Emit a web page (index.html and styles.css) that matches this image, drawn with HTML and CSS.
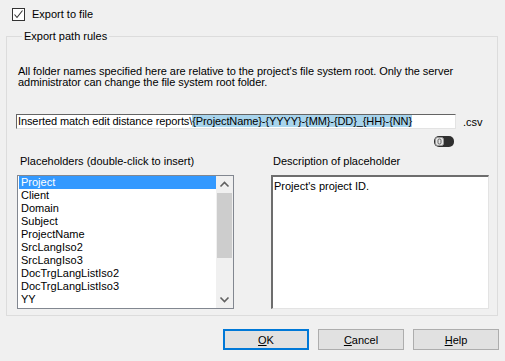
FILE: index.html
```html
<!DOCTYPE html>
<html>
<head>
  <title>Export path rules</title>
  <link rel="stylesheet" href="styles.css">
</head>
<body>
  <div class="dialog">
    <label class="check-row">
      <span class="checkbox">
        <svg width="11" height="11" viewBox="0 0 11 11"><polyline points="1.5,5.5 4,8.5 9.5,1.5" fill="none" stroke="#333" stroke-width="1.1"/></svg>
      </span>
      Export to file
    </label>

    <fieldset class="group">
      <legend>Export path rules</legend>
      <p class="info">All folder names specified here are relative to the project's file system root. Only the server administrator can change the file system root folder.</p>

      <div class="path-row">
        <div class="path-input">Inserted match edit distance reports\<span class="sel">{ProjectName}-{YYYY}-{MM}-{DD}_{HH}-{NN}</span></div>
        <span class="ext">.csv</span>
      </div>

      <div class="toggle-row">
        <svg width="20" height="11" viewBox="0 0 20 11">
          <rect x="0" y="0" width="20" height="11" rx="5" fill="#2f2f2f"/>
          <rect x="1.5" y="1.5" width="8" height="8" rx="2" fill="#e6e6e6" stroke="#9a9a9a"/>
          <rect x="4" y="3" width="3" height="5" rx="1.2" fill="none" stroke="#555" stroke-width="0.9"/>
        </svg>
      </div>

      <div class="columns">
        <div class="col">
          <div class="col-label">Placeholders (double-click to insert)</div>
          <div class="listbox">
            <ul class="items">
              <li class="active">Project</li>
              <li>Client</li>
              <li>Domain</li>
              <li>Subject</li>
              <li>ProjectName</li>
              <li>SrcLangIso2</li>
              <li>SrcLangIso3</li>
              <li>DocTrgLangListIso2</li>
              <li>DocTrgLangListIso3</li>
              <li>YY</li>
            </ul>
            <div class="scrollbar">
              <svg class="arrow" width="17" height="17" viewBox="0 0 17 17"><polyline points="4.5,10.5 8.5,6.5 12.5,10.5" fill="none" stroke="#606060" stroke-width="1.6"/></svg>
              <div class="track"><div class="thumb"></div></div>
              <svg class="arrow" width="17" height="17" viewBox="0 0 17 17"><polyline points="4.5,6.5 8.5,10.5 12.5,6.5" fill="none" stroke="#606060" stroke-width="1.6"/></svg>
            </div>
          </div>
        </div>
        <div class="col">
          <div class="col-label">Description of placeholder</div>
          <div class="description">Project's project ID.</div>
        </div>
      </div>
    </fieldset>

    <div class="buttons">
      <button class="btn default"><u>O</u>K</button>
      <button class="btn"><u>C</u>ancel</button>
      <button class="btn"><u>H</u>elp</button>
    </div>
  </div>
</body>
</html>
```

FILE: styles.css
```css
body {
  margin: 0;
  background-color: #f0f0f0;
  font-family: "Liberation Sans", Arial, sans-serif;
  font-size: 11px;
  color: #000;
}

.dialog {
  width: 505px;
  height: 361px;
  display: flex;
  flex-direction: column;
}

.check-row {
  display: flex;
  align-items: center;
  gap: 7px;
  margin: 8px 0 0 12px;
  height: 13px;
  line-height: 13px;
}

.checkbox {
  width: 11px;
  height: 11px;
  border: 1px solid #333;
  background-color: #fff;
  display: flex;
}

.group {
  margin: 9px 7px 0 6px;
  border: 1px solid #dcdcdc;
  padding: 0 9px 6px 9px;
  min-width: 0;
}

.group legend {
  padding: 0 2px;
  margin-left: 6px;
  line-height: 13px;
}

.info {
  margin: 23px 0 0 2px;
  line-height: 11px;
  letter-spacing: -0.05px;
}

.path-row {
  display: flex;
  align-items: center;
  margin-top: 26px;
}

.path-input {
  width: 436px;
  height: 13px;
  line-height: 13px;
  background-color: #fff;
  border-top: 1px solid #646464;
  border-left: 1px solid #646464;
  border-right: 1px solid #e3e3e3;
  border-bottom: 1px solid #e3e3e3;
  padding: 0 1px;
  white-space: nowrap;
  overflow: hidden;
  letter-spacing: -0.1px;
}

.sel {
  background-color: #a8d4ec;
}

.ext {
  margin-left: 7px;
}

.toggle-row {
  display: flex;
  justify-content: flex-end;
  margin-top: 7px;
  padding-right: 34px;
  height: 11px;
}

.columns {
  display: grid;
  grid-template-columns: 217px 218px;
  column-gap: 37px;
  margin-top: 8px;
  margin-left: 1px;
}

.col-label {
  line-height: 13px;
  padding-left: 3px;
  margin-bottom: 7px;
}

.col:last-child .col-label {
  padding-left: 2px;
}

.listbox {
  height: 132px;
  border: 1px solid #828790;
  background-color: #fff;
  display: flex;
}

.items {
  list-style: none;
  margin: 0;
  padding: 0 0 0 1px;
  flex: 1;
}

.items li {
  height: 13px;
  line-height: 13px;
  padding-left: 2px;
  white-space: nowrap;
}

.items li.active {
  background-color: #3399ff;
  color: #fff;
}

.scrollbar {
  width: 17px;
  background-color: #f0f0f0;
  display: flex;
  flex-direction: column;
}

.track {
  flex: 1;
}

.thumb {
  height: 65px;
  margin: 0 1px;
  background-color: #cdcdcd;
}

.description {
  box-sizing: border-box;
  height: 134px;
  background-color: #fff;
  border-top: 2px solid #6d6d6d;
  border-left: 2px solid #6d6d6d;
  border-right: 1px solid #e3e3e3;
  border-bottom: 1px solid #e3e3e3;
  padding: 3px 0 0 1px;
  line-height: 13px;
}

.buttons {
  display: flex;
  justify-content: flex-end;
  gap: 9px;
  margin-top: 13px;
  padding-right: 6px;
}

.btn {
  width: 86px;
  height: 21px;
  background-color: #e1e1e1;
  border: 1px solid #adadad;
  font-family: "Liberation Sans", Arial, sans-serif;
  font-size: 11px;
  color: #000;
  padding: 0;
}

.btn.default {
  border: 2px solid #0078d7;
}
```
